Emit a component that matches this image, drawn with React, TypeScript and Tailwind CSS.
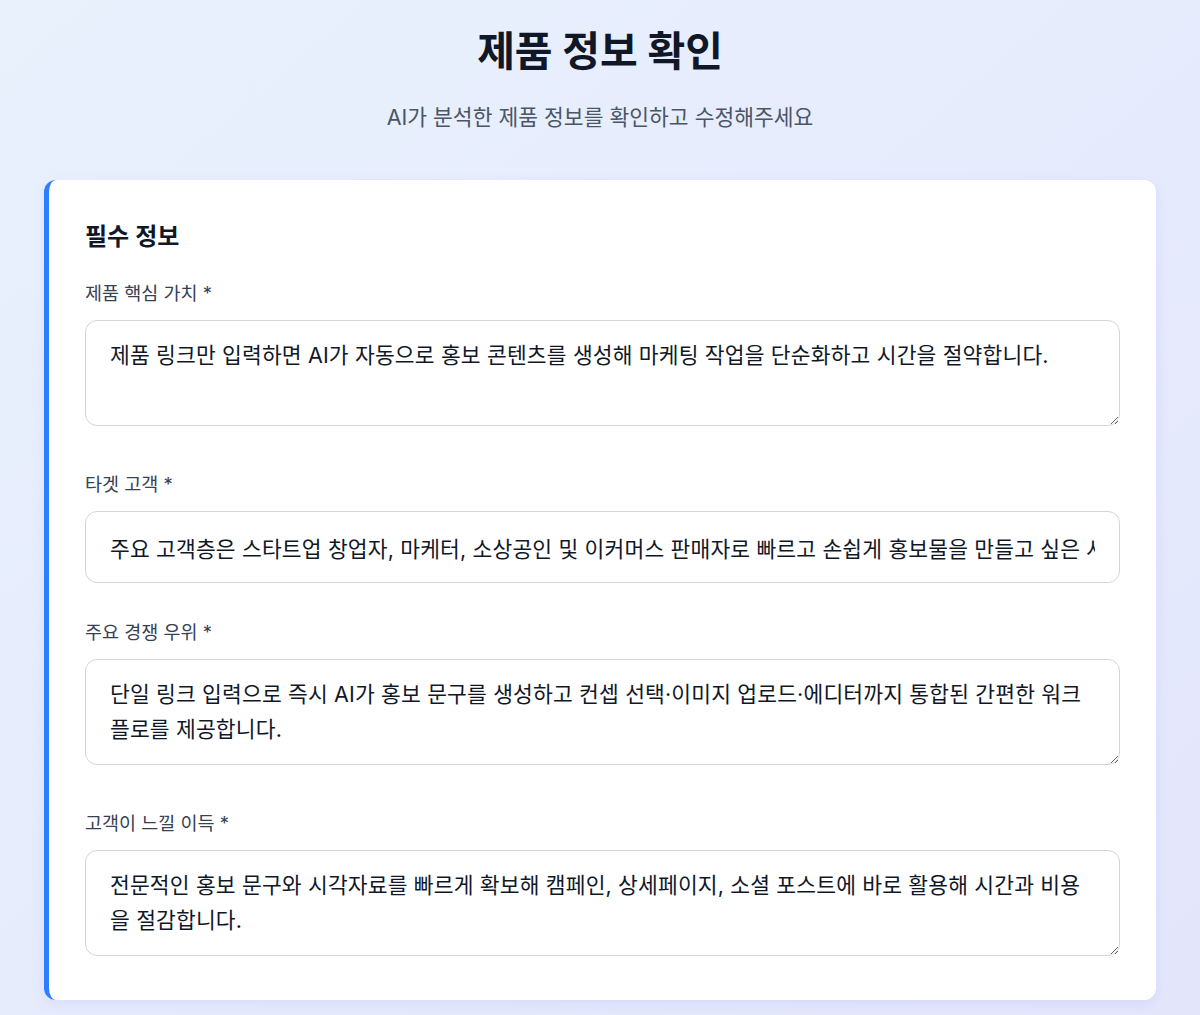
import { useState } from "react";

const FONT = "font-['Inter','Noto_Sans_CJK_KR',sans-serif]";

type FieldDef = {
  key: string;
  label: string;
  multiline: boolean;
  value: string;
};

const FIELDS: FieldDef[] = [
  {
    key: "coreValue",
    label: "제품 핵심 가치",
    multiline: true,
    value:
      "제품 링크만 입력하면 AI가 자동으로 홍보 콘텐츠를 생성해 마케팅 작업을 단순화하고 시간을 절약합니다.",
  },
  {
    key: "target",
    label: "타겟 고객",
    multiline: false,
    value:
      "주요 고객층은 스타트업 창업자, 마케터, 소상공인 및 이커머스 판매자로 빠르고 손쉽게 홍보물을 만들고 싶은 사람들입니다.",
  },
  {
    key: "advantage",
    label: "주요 경쟁 우위",
    multiline: true,
    value:
      "단일 링크 입력으로 즉시 AI가 홍보 문구를 생성하고 컨셉 선택·이미지 업로드·에디터까지 통합된 간편한 워크플로를 제공합니다.",
  },
  {
    key: "benefit",
    label: "고객이 느낄 이득",
    multiline: true,
    value:
      "전문적인 홍보 문구와 시각자료를 빠르게 확보해 캠페인, 상세페이지, 소셜 포스트에 바로 활용해 시간과 비용을 절감합니다.",
  },
];

function FormField({
  field,
  value,
  onChange,
}: {
  field: FieldDef;
  value: string;
  onChange: (v: string) => void;
}) {
  const base =
    "block w-full rounded-xl border border-gray-300 bg-white px-6 py-[17px] text-[21.5px] leading-[35px] tracking-[0.15px] text-gray-900 outline-none focus:border-blue-500";
  return (
    <div className={field.multiline ? "mb-[46px] last:mb-0" : "mb-[37px]"}>
      <label className="mb-[15px] block text-[18.5px] leading-6 text-gray-700">
        {field.label} *
      </label>
      {field.multiline ? (
        <textarea
          className={`${base} h-[106px] resize-y`}
          value={value}
          onChange={(e) => onChange(e.target.value)}
        />
      ) : (
        <input
          className={`${base} h-[72px]`}
          value={value}
          onChange={(e) => onChange(e.target.value)}
        />
      )}
    </div>
  );
}

export default function App() {
  const [values, setValues] = useState<Record<string, string>>(
    Object.fromEntries(FIELDS.map((f) => [f.key, f.value])),
  );

  return (
    <div
      className={`${FONT} min-h-screen bg-gradient-to-br from-[#e9f1fd] to-[#e3e6fb] px-[44px] pt-[25px] pb-10`}
    >
      <h1 className="text-center text-[41px] leading-[52px] font-bold text-gray-900">
        제품 정보 확인
      </h1>
      <p className="mt-[26px] text-center text-[21.5px] leading-7 text-gray-600">
        AI가 분석한 제품 정보를 확인하고 수정해주세요
      </p>

      <div className="mt-[49px] rounded-xl border-l-[5px] border-blue-500 bg-white pt-10 pr-9 pb-[44px] pl-9 shadow-[0_4px_14px_rgba(99,102,241,0.10)]">
        <h2 className="mb-[28px] text-[24px] leading-[33px] font-semibold text-gray-900">
          필수 정보
        </h2>
        {FIELDS.map((f) => (
          <FormField
            key={f.key}
            field={f}
            value={values[f.key]}
            onChange={(v) => setValues((s) => ({ ...s, [f.key]: v }))}
          />
        ))}
      </div>
    </div>
  );
}
